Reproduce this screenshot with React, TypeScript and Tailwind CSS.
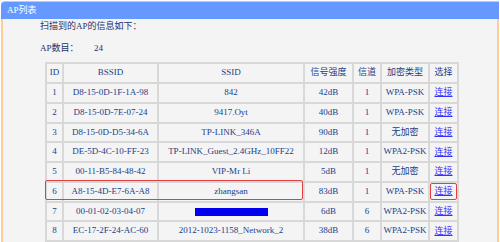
import React from 'react';
import clsx from "clsx";

type Row = {
    id: number | string,
    bssid: string,
    ssid: string,
    signal: string,
    channel: string,
    enc: string,
    hidden?: boolean,
    link?: boolean,
};

const arrRows: Row[] = [
    {id: 1, bssid: 'D8-15-0D-1F-1A-98', ssid: '842', signal: '42dB', channel: '1', enc: 'WPA-PSK', link: true},
    {id: 2, bssid: 'D8-15-0D-7E-07-24', ssid: '9417.Oyt', signal: '40dB', channel: '1', enc: 'WPA-PSK', link: true},
    {id: 3, bssid: 'D8-15-0D-D5-34-6A', ssid: 'TP-LINK_346A', signal: '90dB', channel: '1', enc: '无加密', link: true},
    {id: 4, bssid: 'DE-5D-4C-10-FF-23', ssid: 'TP-LINK_Guest_2.4GHz_10FF22', signal: '12dB', channel: '1', enc: 'WPA2-PSK', link: true},
    {id: 5, bssid: '00-11-B5-84-48-42', ssid: 'VIP-Mr Li', signal: '5dB', channel: '1', enc: '无加密', link: true},
    {id: 6, bssid: 'A8-15-4D-E7-6A-A8', ssid: 'zhangsan', signal: '83dB', channel: '1', enc: 'WPA-PSK', link: true},
    {id: 7, bssid: '00-01-02-03-04-07', ssid: '', signal: '6dB', channel: '6', enc: 'WPA2-PSK', hidden: true, link: true},
    {id: 8, bssid: 'EC-17-2F-24-AC-60', ssid: '2012-1023-1158_Network_2', signal: '38dB', channel: '6', enc: 'WPA2-PSK', link: true},
    // next row, only its top edge is in view
    {id: '', bssid: '', ssid: '', signal: '', channel: '', enc: ''},
];

const arrHeader = ['ID', 'BSSID', 'SSID', '信号强度', '信道', '加密类型', '选择'];
const arrWidth = ['w-[17px]', 'w-[95px]', 'w-[146px]', 'w-[49px]', 'w-[28px]', 'w-[48px]', 'w-[29px]'];

const cellCls = 'border-2 border-[#d8d8d8] text-center p-0 whitespace-nowrap overflow-hidden';

const App = () => {
    return (
        <div className={clsx(
            "w-[500px] h-[242px] overflow-hidden bg-white",
            "font-['Liberation_Serif','Noto_Sans_CJK_SC',serif] text-[9px] text-[#22408a]",
        )}>
            <div className="mx-[1px] mt-[1px] flex flex-col">
                {/*title bar*/}
                <div className={clsx(
                    "h-[18px] pl-[6px] flex items-center",
                    "bg-[#6699ff] border-t border-[#b4cbff] rounded-tl-[4px]",
                    "text-white leading-none",
                )}>AP列表</div>

                {/*body*/}
                <div className={clsx(
                    "h-[300px] pl-[37px] flex flex-col",
                    "border-l-2 border-r-2 border-[#ffcc99] bg-[#f4f4f4]",
                )}>
                    <div className="h-[14px] leading-[14px] text-[#1c2f6c]">扫描到的AP的信息如下：</div>
                    <div className="mt-[8px] h-[14px] leading-[14px] text-[#1c2f6c] flex">
                        <span className="w-[54px]">AP数目：</span>
                        <span>24</span>
                    </div>

                    <div className="relative mt-[7px] ml-[5px] w-[412px]">
                        <table className="w-[412px] table-fixed border-collapse border-2 border-[#d8d8d8]">
                            <colgroup>
                                {arrWidth.map((w, i) => <col key={i} className={w}/>)}
                            </colgroup>
                            <thead>
                            <tr className="h-[20px]">
                                {arrHeader.map((h, i) =>
                                    <th key={i} className={clsx(cellCls, 'font-normal')}>{h}</th>)}
                            </tr>
                            </thead>
                            <tbody>
                            {arrRows.map((r, idx) =>
                                <tr key={idx} className="h-[19.75px]">
                                    <td className={cellCls}>{r.id}</td>
                                    <td className={cellCls}>{r.bssid}</td>
                                    <td className={cellCls}>
                                        {r.hidden
                                            ? <span className="inline-block align-middle w-[73px] h-[8px] bg-[#0000ee]"/>
                                            : r.ssid}
                                    </td>
                                    <td className={cellCls}>{r.signal}</td>
                                    <td className={cellCls}>{r.channel}</td>
                                    <td className={cellCls}>{r.enc}</td>
                                    <td className={cellCls}>
                                        {r.link && <span className={clsx(
                                            "inline-block px-[3px] leading-[15px] text-[#3333ff] underline",
                                            r.id == 6 ? "border border-[#e04040] rounded-[2px]" : "border border-transparent",
                                        )}>连接</span>}
                                    </td>
                                </tr>
                            )}
                            </tbody>
                        </table>

                        {/*highlight of selected row*/}
                        <div className="absolute left-0 top-[118px] w-[258px] h-[20px] border border-[#e04040] rounded-[2px] pointer-events-none"/>
                    </div>
                </div>
            </div>
        </div>
    );
};

export default App;
